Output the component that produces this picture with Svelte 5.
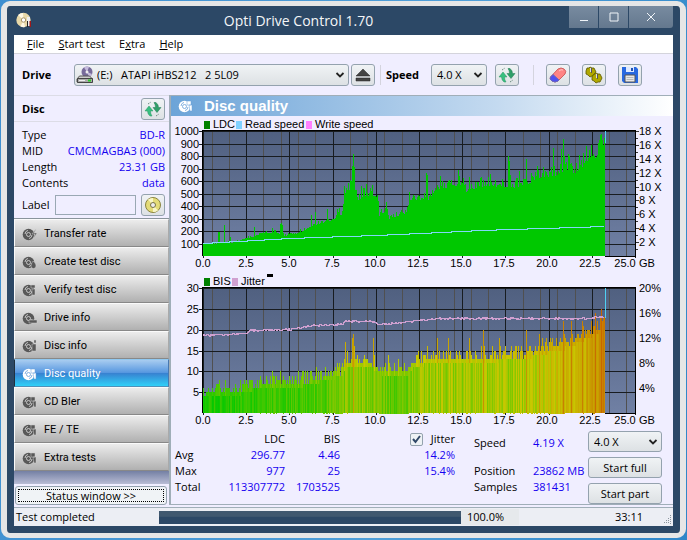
<script>
	const tests = [
		{ label: 'Transfer rate', mark: 'M14 2l-4 5h3l-2 5 4-6h-3z' },
		{ label: 'Create test disc', mark: 'M11 6c2 2 3 3 3 5a2.5 2.5 0 0 1-5 0c0-2 1-3 2-5z' },
		{ label: 'Verify test disc', mark: 'M9 2h4v3H9zM10 6h3v6h-3z' },
		{ label: 'Drive info', mark: 'M7 9h8v3H7z' },
		{ label: 'Disc info', mark: 'M12 1h2v3h-2zM10 5h4v7h-4z' },
		{ label: 'Disc quality', mark: 'M9 2h4v4H9zM11 6h3v6h-2z', active: true },
		{ label: 'CD Bler', mark: 'M9 2h4v4H9zM11 6h3v6h-2z' },
		{ label: 'FE / TE', mark: 'M9 2h4v4H9zM11 6h3v6h-2z' },
		{ label: 'Extra tests', mark: 'M9 2h4v4H9zM11 6h3v6h-2z' }
	];

	const discInfo = [
		['Type', 'BD-R'],
		['MID', 'CMCMAGBA3 (000)'],
		['Length', '23.31 GB'],
		['Contents', 'data']
	];

	// plot area inside each chart
	const X0 = 32;
	const X1 = 464;
	const Y0 = 14;
	const Y1 = 139;
	const END = 434;

	const noise = (n) => {
		const s = Math.sin(n * 127.1 + 11.7) * 43758.5453;
		return s - Math.floor(s);
	};

	// linear interpolation over [x, value] pairs
	function at(points, x) {
		for (let i = 1; i < points.length; i++) {
			const [ax, ay] = points[i - 1];
			const [bx, by] = points[i];
			if (x <= bx) return ay + ((by - ay) * (x - ax)) / (bx - ax);
		}
		return points[points.length - 1][1];
	}

	const ldcBase = [
		[32, 100], [60, 108], [75, 145], [84, 160], [88, 175], [105, 195], [113, 165], [125, 185], [132, 205],
		[138, 240], [146, 260], [152, 275], [160, 290], [171, 345], [173, 520], [183, 560], [187, 460],
		[192, 500], [206, 495], [208, 330], [216, 380], [218, 305], [230, 340], [236, 365], [238, 470],
		[256, 460], [266, 560], [291, 590], [295, 530], [308, 575], [344, 570], [350, 585], [360, 610],
		[370, 650], [386, 670], [396, 700], [404, 690], [412, 750], [426, 830], [434, 960]
	];
	const ldcPeaks = {
		47: 195, 48: 195, 53: 245, 59: 155, 83: 230, 101: 225, 109: 260, 110: 265, 111: 250, 140: 325,
		144: 355, 156: 375, 166: 380, 168: 385, 179: 610, 181: 720, 182: 820, 183: 715, 190: 560, 195: 580,
		201: 565, 215: 430, 255: 665, 256: 645, 269: 640, 287: 690, 288: 640, 298: 630, 319: 660, 337: 800,
		338: 760, 339: 650, 348: 680, 355: 780, 366: 720, 382: 865, 390: 860, 392: 935, 393: 800, 397: 820,
		398: 800, 408: 810, 415: 880, 420: 890, 428: 930, 430: 977, 431: 930
	};

	const bisBase = [
		[32, 4.4], [70, 5], [78, 6], [100, 6.8], [130, 7], [150, 8.2], [170, 9.5], [175, 11.5], [200, 11.5],
		[210, 9.5], [235, 9.5], [242, 11.5], [260, 12.5], [350, 13.3], [375, 15], [400, 16.5], [420, 19],
		[434, 21]
	];
	const bisPeaks = {
		48: 8, 103: 9, 112: 9, 131: 10, 145: 11, 157: 10, 166: 12, 174: 17, 181: 18, 182: 19, 183: 16,
		202: 18, 203: 14, 217: 14, 227: 13, 256: 16, 266: 18, 277: 18, 298: 18, 312: 20, 328: 18, 355: 20,
		368: 19, 392: 22, 400: 22, 411: 22, 424: 24, 430: 25, 432: 23
	};

	const jitterLine = [
		[32, 61], [60, 60], [75, 59], [79, 56], [119, 55], [141, 51], [172, 50], [174, 47], [203, 47],
		[207, 50], [232, 48], [269, 44], [415, 44], [434, 42]
	];

	const columns = Array.from({ length: END - X0 }, (_, i) => X0 + i);
	const scale1 = (Y1 - Y0) / 1000;
	const scale2 = (Y1 - Y0) / 30;

	const ldcPath =
		`M${X0} ${Y1}` +
		columns
			.map((x) => {
				const base = at(ldcBase, x);
				const v = ldcPeaks[x] ?? base * (0.96 + 0.14 * noise(x) ** 2);
				return `V${Math.round(Y1 - v * scale1)}H${x + 1}`;
			})
			.join('') +
		`V${Y1}Z`;

	const bisColor = (v) => {
		const r = Math.round(200 * Math.min(1, (v / 14) ** 1.4));
		const g = Math.round(200 - Math.max(0, v - 14) * 9);
		return `rgb(${r}, ${g}, 0)`;
	};

	const bisBars = columns.flatMap((x) => {
		const base = at(bisBase, x);
		const high = bisPeaks[x] ?? Math.round(base + 3.2 * noise(x + 500) ** 2);
		const low = Math.min(high, Math.round(base - 0.6));
		const tone = base - 3.5 + 5 * noise(x * 3);
		return [
			{ x, v: high, fill: bisColor(high) },
			{ x, v: low, fill: bisColor(bisPeaks[x] > 18 ? high : tone) }
		];
	});

	const jitterPath = columns
		.map((x, i) => `${i ? 'L' : 'M'}${x} ${Math.round(at(jitterLine, x) + noise(x + 90) * 1.6 - 0.8) + 0.5}`)
		.join('');

	// read speed climbs in visible one pixel steps
	const speedLine = [[32, 126], [118, 121], [174, 119], [204, 118], [249, 116], [309, 113], [434, 109]];
	const speedPath = columns.map((x, i) => `${i ? 'H' + x + 'V' : 'M' + x + ' '}${Math.round(at(speedLine, x)) + 0.5}`).join('');

	const gridX = Array.from({ length: 51 }, (_, i) => ({ x: Math.round(X0 + (i * (X1 - X0)) / 50), major: i % 5 === 0 }));
	const minorX = gridX.filter((g, i) => i % 2 === 1 || g.major);
	const lerpY = (n, max) => Math.round(Y1 - (n / max) * (Y1 - Y0));

	const charts = [
		{
			id: 'ldc',
			height: 157,
			legend: [
				{ x: 33, label: 'LDC', color: '#008000' },
				{ x: 65, label: 'Read speed', color: '#80d0ff' },
				{ x: 135, label: 'Write speed', color: '#ff80ff' }
			],
			left: Array.from({ length: 10 }, (_, i) => ({ t: (i + 1) * 100, y: lerpY(i + 1, 10) })),
			right: Array.from({ length: 9 }, (_, i) => ({ t: `${(i + 1) * 2} X`, y: lerpY(i + 1, 9) })),
			ticks: Array.from({ length: 18 }, (_, i) => lerpY(i + 1, 18))
		},
		{
			id: 'bis',
			height: 153,
			legend: [
				{ x: 33, label: 'BIS', color: '#008000' },
				{ x: 61, label: 'Jitter', color: '#d0a0d0' }
			],
			left: Array.from({ length: 6 }, (_, i) => ({ t: (i + 1) * 5, y: lerpY(i + 1, 6) })),
			right: Array.from({ length: 5 }, (_, i) => ({ t: `${(i + 1) * 4}%`, y: lerpY(i + 1, 5) })),
			ticks: []
		}
	];

	const xLabels = Array.from({ length: 11 }, (_, i) => (i * 2.5).toFixed(1));

	let showJitter = $state(true);
	let label = $state('');
</script>

{#snippet discIcon(mark)}
	<svg class="disc" viewBox="0 0 16 14" width="16" height="14" aria-hidden="true">
		<circle cx="6.5" cy="7.5" r="5.8" fill="currentColor" />
		<g fill="none" class="cut">
			<circle cx="6.5" cy="7.5" r="2" />
			<path d="M3 7a4 4 0 0 1 3-3.6M10 8a4 4 0 0 1-3 3.6" />
		</g>
		<circle cx="6.5" cy="7.5" r=".8" fill="currentColor" />
		<path class="mark" d={mark} />
	</svg>
{/snippet}

{#snippet chevron()}
	<svg class="chevron" viewBox="0 0 10 8" width="10" height="8" aria-hidden="true">
		<path d="M1.500 2l3.500 3.500L8.500 2" fill="none" stroke="#222" stroke-width="1.8" />
	</svg>
{/snippet}

{#snippet refreshIcon()}
	<svg viewBox="0 0 18 18" width="18" height="18" aria-hidden="true">
		<path d="M5 6L1 11h2.500q0 3 2.500 5h2q-1.500-2-1.500-5H9z" fill="#38c080" stroke="#289060" stroke-width=".5" />
		<path d="M13 12.500l4-5h-2.500q0-3-2.500-5h-2q1.500 2 1.500 5H9z" fill="#2f9f68" stroke="#207850" stroke-width=".5" />
		<path d="M4 4l3-2M12 16l3-2" stroke="#507868" stroke-dasharray="1 1" />
	</svg>
{/snippet}

<div class="window">
	<header class="titlebar">
		<svg class="app-icon" viewBox="0 0 16 16" width="16" height="16" aria-hidden="true">
			<circle cx="7.500" cy="8" r="7.200" fill="#e8d8a8" />
			<path d="M7.500 8L2 3a7 7 0 0 1 5-2zM7.500 8l-3 6.500A7 7 0 0 0 9 15z" fill="#fff8e4" />
			<circle cx="7.500" cy="8" r="2.200" fill="#fff" stroke="#a89468" />
			<path d="M11 5h3v9h-3z" fill="#eee" />
			<path d="M13.500 9H15v6h-1.500z" fill="#a01818" />
			<path d="M11 9h1v6h-1z" fill="#222" />
		</svg>
		<h1>Opti Drive Control 1.70</h1>
		<div class="caption">
			<button aria-label="Minimize"><svg viewBox="0 0 10 10" width="10" height="10"><path d="M1 8.500h8" /></svg></button>
			<button aria-label="Maximize"><svg viewBox="0 0 10 10" width="10" height="10"><path d="M1 1h8v8H1z" /></svg></button>
			<button class="close" aria-label="Close"><svg viewBox="0 0 10 10" width="10" height="10"><path d="M1 1l8 8M9 1L1 9" /></svg></button>
		</div>
	</header>

	<div class="client">
		<nav class="menubar">
			<button><u>F</u>ile</button>
			<button><u>S</u>tart test</button>
			<button>E<u>x</u>tra</button>
			<button><u>H</u>elp</button>
		</nav>

		<div class="toolbar">
			<label class="caption-label drive-label" for="drive">Drive</label>
			<div class="select drive">
				<svg class="drive-icon" viewBox="0 0 18 18" width="18" height="18" aria-hidden="true">
					<circle cx="11" cy="6" r="5.500" fill="#776b9a" />
					<path d="M11 6L8 1.500A5 5 0 0 1 13 1zM11 6l5 2a5 5 0 0 1-3 3z" fill="#c5badd" />
					<circle cx="11" cy="6" r="1.500" fill="#eee" />
					<path d="M3.500 10h10l3 3v3H1v-3z" fill="#ccc" stroke="#555" />
					<path d="M1.500 12.500h15v4h-15z" fill="#aaa" stroke="#444" />
					<path d="M3 14.500h6" stroke="#eee" />
					<path d="M12 13.500h3v2h-3z" fill="#28d020" />
				</svg>
				<select id="drive"><option>(E:) &nbsp; ATAPI iHBS212 &nbsp; 2 5L09</option></select>
				{@render chevron()}
			</div>
			<button class="tool eject" aria-label="Eject">
				<svg viewBox="0 0 18 16" width="18" height="16"><path d="M9 2l7 7H2zM2 11h14v3H2z" fill="#444" stroke="#222" stroke-width=".5" /></svg>
			</button>
			<span class="sep"></span>
			<label class="caption-label speed-label" for="speed">Speed</label>
			<div class="select speed">
				<select id="speed"><option>4.0 X</option></select>
				{@render chevron()}
			</div>
			<button class="tool reload" aria-label="Refresh speeds">{@render refreshIcon()}</button>
			<span class="sep"></span>
			<div class="actions">
				<button class="tool" aria-label="Erase disc">
					<svg viewBox="0 0 18 18" width="18" height="18">
						<path d="M1.500 11L9 3q3-2 6 0t1 5l-7 7q-3 2-6 0t-1.500-4z" fill="#ff8484" stroke="#d06060" />
						<path d="M1.500 11L4 8.500l6 5.500-1 1q-3 2-6 0t-1.500-4z" fill="#5050f0" stroke="#6868c0" />
						<path d="M10 5q2-2 4-1" stroke="#ffc4c4" fill="none" />
					</svg>
				</button>
				<button class="tool" aria-label="Settings">
					<svg viewBox="0 0 18 18" width="18" height="18">
						<g fill="#b0a800" stroke="#5c5600" stroke-width=".8">
							<path d="M2 2l2 0 1-1 2 1 2 0 1 2 1 2-2 2 0 2-2 0-2 1-2-2-2-1 0-3z" />
							<path d="M8 9l2-1 1-1 2 1 2 0 1 2 1 2-1 2-1 2-2 0-2 1-2-2-2-1 0-3z" />
						</g>
						<path d="M5.500 2v4M11.500 8v4" stroke="#ddd" />
						<path d="M6.500 2v5M12.500 8v5" stroke="#555" />
					</svg>
				</button>
				<button class="tool" aria-label="Save">
					<svg viewBox="0 0 18 18" width="18" height="18">
						<path d="M1 1h14l2 2v14H3l-2-2z" fill="#2868e0" />
						<path d="M5 1h8v5H5z" fill="#dce8ff" />
						<path d="M10 2h2v3h-2z" fill="#2050b0" />
						<path d="M4 9h10v7H4z" fill="#e8e8e8" stroke="#555" />
						<path d="M5.500 11.500h7M5.500 13.500h7" stroke="#b8b8b8" />
					</svg>
				</button>
			</div>
		</div>

		<div class="body">
			<aside>
				<div class="disc-head">
					<h2>Disc</h2>
					<button class="tool" aria-label="Reload disc">{@render refreshIcon()}</button>
				</div>
				<dl class="disc-info">
					{#each discInfo as [key, value]}
						<div><dt>{key}</dt><dd>{value}</dd></div>
					{/each}
				</dl>
				<div class="label-row">
					<label for="disc-label">Label</label>
					<input id="disc-label" type="text" bind:value={label} />
					<button class="tool" aria-label="Write label">
						<svg viewBox="0 0 18 18" width="18" height="18">
							<circle cx="9" cy="9" r="7.500" fill="#e4dc78" stroke="#8a8440" />
							<path d="M9 9L4 3.500A7 7 0 0 1 9 2zM9 9l5 5.500A7 7 0 0 1 9 16z" fill="#f8f6c8" />
							<circle cx="9" cy="9" r="2.500" fill="#eee" stroke="#77734a" />
						</svg>
					</button>
				</div>

				<nav class="tests">
					{#each tests as test}
						<button class:active={test.active}>
							{@render discIcon(test.mark)}
							{test.label}
						</button>
					{/each}
				</nav>
				<div class="filler"></div>
				<button class="status-toggle">Status window &gt;&gt;</button>
			</aside>

			<main>
				<div class="panel-head">
					{@render discIcon('M9 2h4v4H9zM11 6h3v6h-2z')}
					<h2>Disc quality</h2>
				</div>

				{#each charts as chart}
					<svg class="chart" viewBox="0 0 502 {chart.height}" role="img" aria-label="{chart.id} chart">
						<defs>
							<linearGradient id="bg-{chart.id}" x2="0" y2="1">
								<stop offset="0" stop-color="#506080" />
								<stop offset="1" stop-color="#7080a4" />
							</linearGradient>
						</defs>

						{#each chart.legend as item}
							<rect x={item.x} y="4" width="6" height="8" fill={item.color} />
							<text x={item.x + 9} y="11">{item.label}</text>
						{/each}
						{#if chart.id === 'bis'}
							<rect x="96" y="0" width="6" height="3" />
						{/if}

						<g shape-rendering="crispEdges">
							<rect x={X0} y={Y0} width={X1 - X0} height={Y1 - Y0} fill="url(#bg-{chart.id})" />
							{#each minorX as line}
								<rect x={line.x} y={Y0} width="1" height={Y1 - Y0 + (line.major ? 2 : 0)} fill={line.major ? '#181c20' : '#505050'} />
							{/each}
							{#each chart.left as tick}
								<rect x={X0 - 4} y={tick.y} width={X1 - X0 + 4} height="1" fill="#181c20" />
							{/each}
							{#each chart.ticks as y, i}
								<rect x={X1} {y} width={i % 2 ? 4 : 3} height="1" fill="#333" />
							{/each}

							{#if chart.id === 'ldc'}
								<path d={ldcPath} fill="#00c800" />
								<path d={speedPath} fill="none" stroke="#80d8f8" />
								<rect x={END} y={Y0} width="1" height="12" fill="#50d0f0" />
							{:else}
								{#each bisBars as bar}
									<rect x={bar.x} y={Math.round(Y1 - bar.v * scale2)} width="1" height={Math.round(bar.v * scale2)} fill={bar.fill} />
								{/each}
								{#if showJitter}
									<path d={jitterPath} fill="none" stroke="#d0a0d0" />
								{/if}
								<rect x={END} y={Y0} width="1" height="30" fill="#50d0f0" />
							{/if}

							<path d="M{X0 - 1} {Y0 - 1}H{X1 + 1}V{Y1 + 1}H{END}V{Y1}H{X1}V{Y0}H{X0}V{Y1}H{X0 - 1}Z" />
						</g>

						{#each chart.left as tick}
							<text x={X0 - 4} y={tick.y + 4} text-anchor="end">{tick.t}</text>
						{/each}
						{#each chart.right as tick}
							<text x={X1 + 4} y={tick.y + 4}>{tick.t}</text>
						{/each}
						{#each xLabels as text, i}
							<text x={i === 10 ? 454 : X0 + i * 43} y="150" text-anchor="middle">{text}</text>
						{/each}
						<text x="468" y="150">GB</text>
					</svg>
				{/each}

				<div class="results">
					<table>
						<thead>
							<tr>
								<th></th>
								<th>LDC</th>
								<th>BIS</th>
								<th><label><input type="checkbox" bind:checked={showJitter} />Jitter</label></th>
							</tr>
						</thead>
						<tbody>
							<tr><th>Avg</th><td>296.77</td><td>4.46</td><td>14.2%</td></tr>
							<tr><th>Max</th><td>977</td><td>25</td><td>15.4%</td></tr>
							<tr><th>Total</th><td>113307772</td><td>1703525</td><td></td></tr>
						</tbody>
					</table>
					<dl class="position">
						<dt>Speed</dt><dd>4.19 X</dd>
						<dt>Position</dt><dd>23862 MB</dd>
						<dt>Samples</dt><dd>381431</dd>
					</dl>
					<div class="controls">
						<div class="select">
							<select aria-label="Test speed"><option>4.0 X</option></select>
							{@render chevron()}
						</div>
						<button>Start full</button>
						<button>Start part</button>
					</div>
				</div>
			</main>
		</div>

		<footer>
			<span class="state">Test completed</span>
			<div class="progress" role="progressbar" aria-label="Progress" aria-valuenow="100"></div>
			<span class="percent">100.0%</span>
			<span class="elapsed">33:11</span>
			<svg class="grip" viewBox="0 0 9 9" width="9" height="9" aria-hidden="true">
				<path d="M8.500 0v9M6.500 3v6M4.500 5v4M2.500 7v2" stroke="#8a949c" stroke-dasharray="1 1" />
			</svg>
		</footer>
	</div>
</div>

<style>
	:global(body) {
		background: linear-gradient(100deg, #3f8fd0, #4f9fd8 60%, #2f86c8);
		font-family: 'Open Sans', 'Noto Sans', sans-serif;
		font-size: 11px;
		line-height: 16px;
		color: #000;
	}
	.window {
		box-sizing: border-box;
		display: flex;
		flex-direction: column;
		min-height: calc(100vh - 3px);
		margin: 1px 1px 2px;
		padding: 0 7px 7px;
		border: 5px solid #e6e6e6;
		border-width: 5px 6px;
		border-radius: 9px;
		background: #2c4866;
	}
	h1,
	h2,
	dl,
	dd {
		margin: 0;
	}
	button,
	select,
	input {
		box-sizing: border-box;
		margin: 0;
		font: inherit;
		color: inherit;
	}
	svg {
		display: block;
		flex: none;
	}

	.titlebar {
		display: grid;
		grid-template-columns: 88px 1fr 104px;
		align-items: start;
		height: 29px;
	}
	.app-icon {
		margin: 6px 0 0 2px;
	}
	h1 {
		padding-right: 74px;
		font-size: 14px;
		font-weight: 400;
		line-height: 29px;
		text-align: center;
		color: #f4f6f8;
	}
	.caption {
		display: flex;
		gap: 1px;
	}
	.caption button {
		display: grid;
		place-items: center;
		width: 29px;
		height: 22px;
		padding: 0;
		border: 0;
		background: linear-gradient(#788ba0, #64788e);
	}
	.caption .close {
		width: 44px;
		border-radius: 0 0 3px 0;
	}
	.caption path {
		fill: none;
		stroke: #f0f4f8;
	}

	.client {
		display: flex;
		flex: 1;
		flex-direction: column;
		background: #f0eeff;
	}
	.menubar {
		display: flex;
		gap: 14px;
		height: 18px;
		padding-left: 13px;
		border-bottom: 1px solid #d4d4dc;
		background: #fff;
	}
	.menubar button {
		padding: 0;
		border: 0;
		background: none;
		font-size: 11px;
		line-height: 18px;
	}

	.toolbar {
		display: flex;
		align-items: center;
		height: 41px;
		padding: 0 31px 0 8px;
	}
	.caption-label,
	.disc-head h2 {
		font-size: 11px;
		font-weight: 700;
	}
	.drive-label {
		width: 52px;
	}
	.speed-label {
		width: 50px;
		padding-left: 5px;
		box-sizing: border-box;
	}
	.select {
		display: grid;
		align-items: center;
	}
	.select > * {
		grid-area: 1 / 1;
	}
	.select select {
		width: 100%;
		height: 22px;
		padding: 0 5px;
		border: 1px solid #94a2ae;
		border-radius: 3px;
		background: linear-gradient(#f0f3f5, #dde1e4);
		appearance: none;
	}
	.chevron {
		justify-self: end;
		margin-right: 4px;
		pointer-events: none;
	}
	.drive {
		flex: 1;
	}
	.drive select {
		padding-left: 22px;
	}
	.drive-icon {
		z-index: 1;
		margin-left: 2px;
		pointer-events: none;
	}
	.speed {
		width: 56px;
	}
	.tool {
		display: grid;
		flex: none;
		place-items: center;
		width: 24px;
		height: 22px;
		padding: 0;
		border: 1px solid #94a2ae;
		border-radius: 3px;
		background: linear-gradient(#f0f3f5, #dde1e4);
	}
	.eject {
		margin: 0 5px 0 2px;
	}
	.reload {
		margin: 0 14px 0 8px;
	}
	.sep {
		width: 1px;
		height: 20px;
		background: #d4d4de;
	}
	.actions {
		display: flex;
		gap: 12px;
		margin-left: 12px;
	}

	.body {
		display: flex;
		flex: 1;
	}
	aside {
		display: flex;
		flex: none;
		flex-direction: column;
		width: 155px;
		border-top: 1px solid #dcdce6;
	}
	.disc-head {
		display: flex;
		align-items: center;
		justify-content: space-between;
		height: 25px;
		padding: 0 4px 0 8px;
		border-bottom: 1px solid #dcdce6;
	}
	.disc-info {
		padding: 5px 4px 0 8px;
	}
	.disc-info div {
		display: flex;
		justify-content: space-between;
		height: 16px;
	}
	dd,
	td {
		color: #1400f0;
	}
	.label-row {
		display: flex;
		align-items: center;
		gap: 5px;
		height: 27px;
		padding: 0 4px 0 8px;
	}
	.label-row input {
		flex: 1;
		min-width: 0;
		height: 20px;
		border: 1px solid #9aa8b4;
		background: #f0eeff;
	}
	.tests {
		display: flex;
		flex-direction: column;
		border-top: 1px solid #8a949c;
	}
	.tests button {
		display: flex;
		align-items: center;
		gap: 6px;
		height: 28px;
		padding: 1px 0 0 7px;
		border: 1px solid #fafafa;
		border-right-color: #aaa;
		border-bottom-color: #888;
		background: linear-gradient(#ececec, #c8c8c8 60%, #b0b0b0);
		font-family: Roboto, 'Liberation Sans', sans-serif;
		font-size: 11px;
	}
	.tests .active {
		border-color: #90c8f0 #4878b0 #5090b8 #203040;
		background: linear-gradient(#a8ccf0, #5898e0 48%, #3880d0 50%, #30d0f8);
		color: #fff;
	}
	.disc {
		color: #585858;
	}
	.cut {
		stroke: #ddd;
		stroke-width: 0.8;
	}
	.mark {
		fill: #585858;
		stroke: #ccc;
		stroke-width: 0.5;
	}
	.active .disc,
	.panel-head .disc {
		color: #fff;
	}
	.active .mark,
	.panel-head .mark {
		fill: #fff;
		stroke: #68a0d8;
	}
	.active .cut,
	.panel-head .cut {
		stroke: #68a0d8;
	}
	.filler {
		flex: 1;
		min-height: 10px;
		background: linear-gradient(#7480a4, #b8bcd4);
	}
	.status-toggle {
		height: 19px;
		margin: 2px 2px 2px 1px;
		padding: 0;
		border: 1px solid #94a2ae;
		border-radius: 3px;
		outline: 1px dotted #000;
		outline-offset: -4px;
		background: #f0f3f6;
		line-height: 16px;
	}

	main {
		flex: 1;
		min-width: 0;
		margin-bottom: 2px;
		border: 1px solid #a0aeb8;
		border-left-width: 2px;
		border-right: 0;
	}
	.panel-head {
		display: flex;
		align-items: center;
		gap: 10px;
		height: 20px;
		padding-left: 7px;
		margin-bottom: 1px;
		background: linear-gradient(90deg, #6ca4d8, #c4daf0 65%, #fff);
	}
	.panel-head h2 {
		font-family: 'Liberation Sans', sans-serif;
		font-size: 15px;
		line-height: 20px;
		color: #fff;
	}
	.chart {
		width: 100%;
		height: auto;
	}
	.chart text {
		font-family: 'Liberation Sans', sans-serif;
		font-size: 11px;
	}

	.results {
		display: flex;
		align-items: flex-start;
		padding: 4px 11px 0 4px;
	}
	table {
		flex: none;
		width: 280px;
		border-collapse: collapse;
		table-layout: fixed;
	}
	th,
	td {
		height: 16px;
		padding: 0;
		font-weight: 400;
		text-align: right;
	}
	tbody th,
	th:first-child {
		width: 28px;
		text-align: left;
	}
	th:nth-child(2) {
		width: 82px;
	}
	th:nth-child(3) {
		width: 55px;
	}
	th label {
		display: flex;
		align-items: center;
		justify-content: flex-end;
		gap: 8px;
	}
	input[type='checkbox'] {
		width: 13px;
		height: 13px;
		border: 1px solid #94a2ae;
		border-radius: 2px;
		background: #eef2f5;
		appearance: none;
	}
	input[type='checkbox']:checked {
		background: #eef2f5 url("data:image/svg+xml,%3Csvg xmlns='http://www.w3.org/2000/svg' viewBox='0 0 11 11'%3E%3Cpath d='M2 5l2.500 3L9 2' fill='none' stroke='%23304868' stroke-width='2'/%3E%3C/svg%3E");
	}
	.position {
		display: grid;
		flex: 1;
		grid-template-columns: 59px 1fr;
		grid-template-rows: 28px 16px 16px;
		align-content: start;
		padding: 4px 0 0 19px;
	}
	.controls {
		display: grid;
		gap: 5px;
		width: 74px;
	}
	.controls .select,
	.controls button {
		height: 21px;
	}
	.controls .select select {
		height: 21px;
	}
	.controls button {
		padding: 0;
		border: 1px solid #94a2ae;
		border-radius: 3px;
		background: linear-gradient(#f0f3f5, #dde1e4);
	}

	footer {
		display: flex;
		align-items: center;
		height: 18px;
		border-top: 1px solid #a0aeb8;
		background: #eceef4;
	}
	.state {
		width: 143px;
		padding-left: 2px;
	}
	.progress {
		flex: 1;
		height: 13px;
		background: linear-gradient(#40586f 40%, #2c4866 50%);
	}
	.percent {
		width: 52px;
		padding-left: 6px;
		background: #e6e9ec;
	}
	.elapsed {
		box-sizing: border-box;
		width: 125px;
		padding-left: 96px;
	}
	.grip {
		align-self: end;
		margin: 0 2px 2px 18px;
	}
</style>
